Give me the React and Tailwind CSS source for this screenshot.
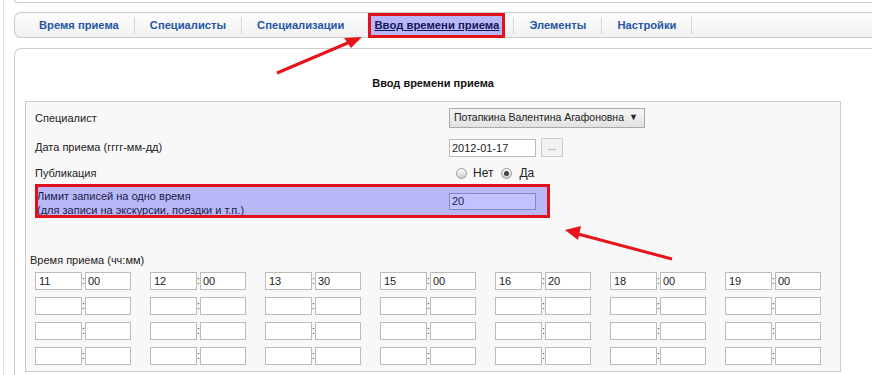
import React from "react";

const tabs = [
  { name: "Время приема" },
  { name: "Специалисты" },
  { name: "Специализации" },
  { name: "Ввод времени приема", active: true },
  { name: "Элементы" },
  { name: "Настройки" },
];

const times = [
  ["11", "00"],
  ["12", "00"],
  ["13", "30"],
  ["15", "00"],
  ["16", "20"],
  ["18", "00"],
  ["19", "00"],
];

const TimeField = ({ h, m }) => (
  <div className="flex items-center w-[96px]">
    <div className="w-[47px] h-[18px] bg-white border border-[#bbb] px-[3px] leading-[16px]">
      {h}
    </div>
    <span className="w-[3px] text-[10px] leading-[16px] text-[#333]">:</span>
    <div className="w-[46px] h-[18px] bg-white border border-[#bbb] px-[2px] leading-[16px]">
      {m}
    </div>
  </div>
);

const Radio = ({ checked }) => (
  <span className="w-[11px] h-[11px] rounded-full border border-[#999] bg-gradient-to-b from-[#fff] to-[#ccc] flex items-center justify-center">
    {checked && <span className="w-[5px] h-[5px] rounded-full bg-[#444]" />}
  </span>
);

export default function App() {
  return (
    <div className="relative w-[872px] h-[375px] overflow-hidden bg-white font-['Liberation_Sans',Arial,sans-serif] text-[11px] text-[#222]">
      <div className="ml-[3px] h-full border-l border-[#ddd] pl-[10px]">
        {/* top box */}
        <div className="h-[3px] border-b border-l border-[#ccc] rounded-bl-[6px]" />

        {/* tab bar */}
        <div className="mt-[9px] h-[26px] flex items-center border border-r-0 border-[#ccc] rounded-l-[7px] bg-gradient-to-b from-[#fdfdfd] to-[#f1f1f1] pl-[9px]">
          {tabs.map((t, i) => (
            <React.Fragment key={t.name}>
              {t.active ? (
                <div className="relative ml-[9px] mr-[8px] w-[137px] h-[25px] flex items-center justify-center bg-[#b8b8f8]">
                  <span className="font-bold underline text-[#15155a] text-[11.3px]">{t.name}</span>
                  <span className="absolute inset-0 border-[3px] border-[#e2101a]" />
                </div>
              ) : (
                <span className="px-[15px] font-bold text-[#2456a6] text-[11.2px]">{t.name}</span>
              )}
              {!tabs[i + 1]?.active && <span className="w-px h-[17px] bg-[#d4d4d4]" />}
            </React.Fragment>
          ))}
        </div>

        {/* content box */}
        <div className="mt-[10px] h-[400px] border border-r-0 border-[#ccc] rounded-tl-[7px] pl-[10px]">
          <div className="w-[816px] pt-[27px] text-center font-bold leading-[14px] text-[#111]">
            Ввод времени приема
          </div>

          <div className="mt-[11px] w-[816px] bg-[#f8f8f8] border border-[#ccc] pl-[9px] pt-[6px] pb-[6px]">
            <div className="flex items-center h-[20px]">
              <span className="w-[414px]">Специалист</span>
              <div className="w-[196px] h-[20px] border border-[#aaa] bg-gradient-to-b from-[#f6f6f6] to-[#e2e2e2] flex items-center justify-between pl-[4px] pr-[6px] whitespace-nowrap">
                <span className="text-[10.5px]">Потапкина Валентина Агафоновна</span>
                <span className="text-[9px]">▼</span>
              </div>
            </div>

            <div className="mt-[10px] flex items-center h-[19px]">
              <span className="w-[414px]">Дата приема (гггг-мм-дд)</span>
              <div className="w-[87px] h-[18px] bg-white border border-[#bbb] px-[2px] leading-[16px]">
                2012-01-17
              </div>
              <div className="ml-[5px] w-[22px] h-[19px] border border-[#ccc] bg-[#f2f2f2] flex items-center justify-center text-[9px] text-[#555]">
                ...
              </div>
            </div>

            <div className="mt-[8px] flex items-center h-[16px]">
              <span className="w-[421px]">Публикация</span>
              <Radio />
              <span className="ml-[6px] text-[12px]">Нет</span>
              <span className="ml-[8px]" />
              <Radio checked />
              <span className="ml-[7px] text-[12px]">Да</span>
            </div>

            <div className="relative mt-[3px] w-[515px] h-[34px] bg-[#b8b8f8] flex items-center">
              <div className="w-[414px] pl-[2px] pt-[4px] leading-[14px] text-[#1b1b4a]">
                <div>Лимит записей на одно время</div>
                <div>(для записи на экскурсии, поездки и т.п.)</div>
              </div>
              <div className="w-[87px] h-[17px] bg-[#c2c2ff] border border-[#8585c8] px-[2px] leading-[15px] text-[#1b1b4a]">
                20
              </div>
              <span className="absolute inset-0 border-[3px] border-[#e2101a]" />
            </div>

            <div className="mt-[35px] -ml-[5px] leading-[14px]">Время приема (чч:мм)</div>

            <div className="mt-[5px] flex flex-col gap-[7px]">
              {[0, 1, 2, 3].map((r) => (
                <div key={r} className="flex gap-[19px]">
                  {times.map((t, i) => (
                    <TimeField key={i} h={r === 0 ? t[0] : ""} m={r === 0 ? t[1] : ""} />
                  ))}
                </div>
              ))}
            </div>
          </div>
        </div>
      </div>

      {/* annotation arrows */}
      <svg className="absolute inset-0 pointer-events-none" width="872" height="375">
        <line x1="277" y1="73" x2="350" y2="42" stroke="#e8141b" strokeWidth="3" />
        <polygon points="362,37 344,38 351,48" fill="#e8141b" />
        <line x1="672" y1="259" x2="578" y2="234" stroke="#e8141b" strokeWidth="3" />
        <polygon points="565,230 581,226 578,240" fill="#e8141b" />
      </svg>
    </div>
  );
}
